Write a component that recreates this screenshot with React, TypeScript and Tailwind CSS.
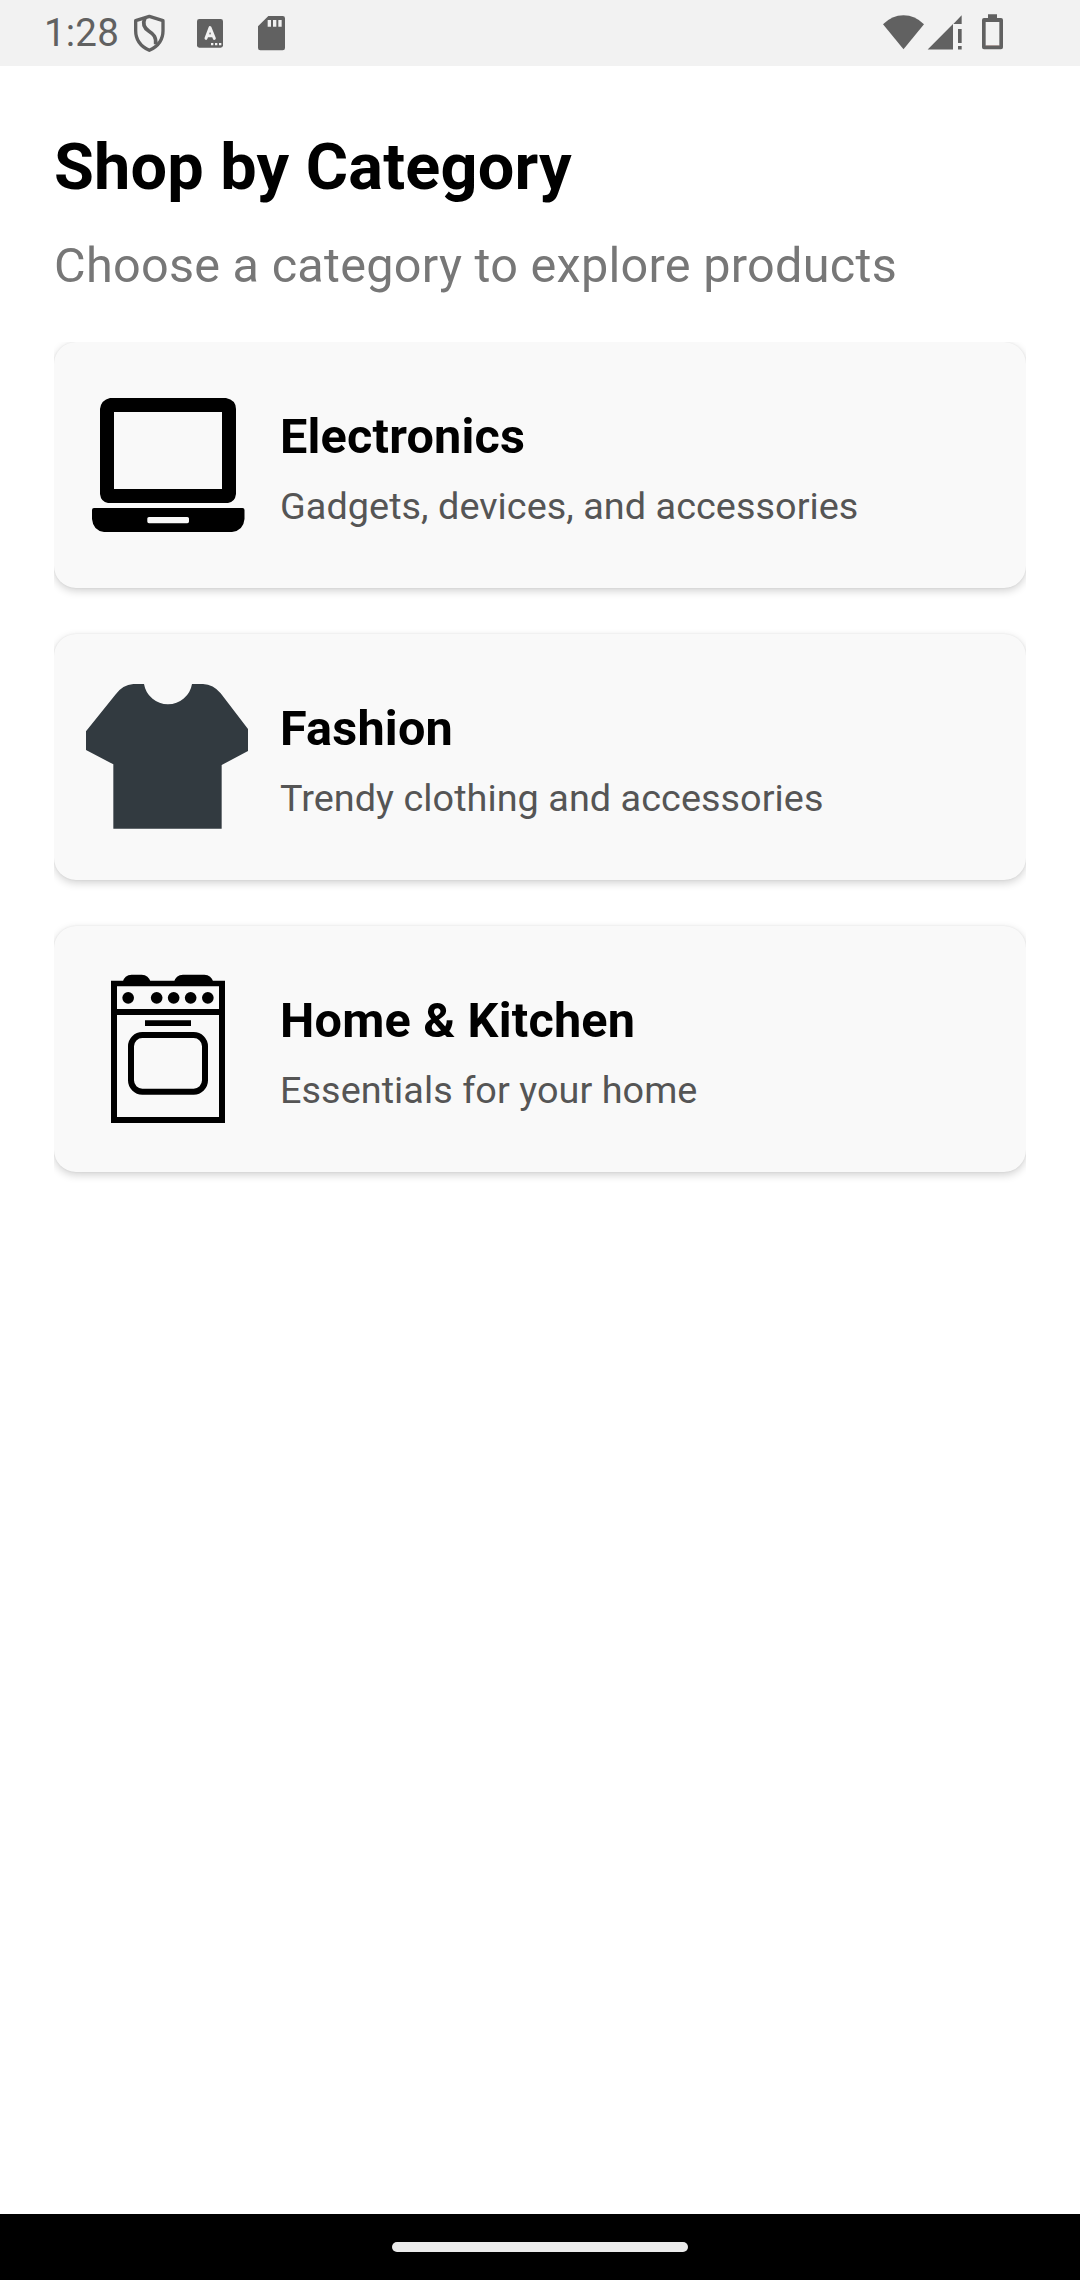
import type { ReactNode } from 'react';

function LaptopIcon() {
  return (
    <svg className="size-[162px] shrink-0" viewBox="86 384 162 162">
      <path fillRule="evenodd" d="M110 398H226Q236 400 236 409V494Q235 502 228 503H108Q101 502 100 494V409Q101 400 110 398ZM114 412V489H222V412Z" />
      <path fillRule="evenodd" d="M94 508H242.500Q244.500 508 244.500 510V519Q243.500 530.500 232 532H104Q93 530.500 92 519V510Q92 508 94 508ZM149 517Q147.300 517 147.300 518.500V521.500Q147.300 523.300 149 523.300H187.300Q189 523.300 189 521.500V518.500Q189 517 187.300 517Z" />
    </svg>
  );
}

function ShirtIcon() {
  return (
    <svg className="size-[162px] shrink-0" viewBox="48 48 486 486">
      <path fill="#323a40" d="M190 72H222A73 73 0 0 0 366 72H399Q430 73 452 100L534 207V273L455 315V506H130V313L48 270V214L136 104Q158 74 190 72Z" />
    </svg>
  );
}

function StoveIcon() {
  return (
    <svg className="size-[162px] shrink-0" viewBox="-12 24 486 486">
      <path d="M98 66Q103 45 125 44H155Q176 45 182 66ZM252 66Q257 45 279 44H343Q364 45 370 66Z" />
      <path fillRule="evenodd" d="M63 62H405V489H63ZM81 79V147H387V79ZM81 165V471H387V165Z" />
      <circle cx="114.500" cy="113.500" r="17.500" />
      <circle cx="200" cy="113.500" r="17.500" />
      <circle cx="251" cy="113.500" r="17.500" />
      <circle cx="302" cy="113.500" r="17.500" />
      <circle cx="353.500" cy="113.500" r="17.500" />
      <path d="M165 181H303V198H165Z" />
      <rect x="123" y="225" width="222" height="170" rx="34" fill="none" stroke="#000" strokeWidth="18" />
    </svg>
  );
}

function StatusBar() {
  return (
    <header className="flex h-[66px] shrink-0 items-start bg-[#f2f2f2] pl-[44px] text-[#616161]">
      <span className="w-[76px] text-[38.500px] leading-[66px] tracking-[0.2px]">1:28</span>
      <svg className="ml-[10px] h-[65px] w-[200px]" viewBox="390 0 600 195">
        <g transform="translate(90 0)">
          <path d="M358 49L399 62V92Q399 132 358 151Q317 132 317 92V62Z" fill="none" stroke="currentColor" strokeWidth="10" strokeLinejoin="round" />
          <path d="M345 54C335 75 345 86 357 94C371 103 379 110 377 133" fill="none" stroke="currentColor" strokeWidth="11" />
          <rect x="501" y="57" width="78" height="86" rx="7" fill="currentColor" />
          <path d="M528 115L540 83L553 115M532 107H549" fill="none" stroke="#f2f2f2" strokeWidth="9" strokeLinecap="round" strokeLinejoin="round" />
          <path d="M543 129h7v7h-7zM555 129h7v7h-7zM567 129h7v7h-7z" fill="#f2f2f2" />
          <path fillRule="evenodd" fill="currentColor" d="M715 48H758Q765 48 765 55V144Q765 151 758 151H691Q684 151 684 144V79ZM713 60V80H723V60ZM729 60V80H739V60ZM745 60V80H755V60Z" />
        </g>
      </svg>
      <svg className="mr-[72px] ml-auto h-[65px] w-[134px]" viewBox="42 0 402 195" fill="currentColor">
        <path d="M69 73Q96 46 130.500 46T192 73L130.500 148Z" />
        <path d="M203 148.500L279 72V148.500ZM280 72L305 46V72ZM294 87H305V129H294ZM294 138H305V148.500H294Z" />
        <path fillRule="evenodd" d="M384 43H411V54H423Q429 54 429 60V142Q429 148 423 148H372Q366 148 366 142V60Q366 54 372 54H384ZM377 66V136H418V66Z" />
        <path d="M377 135H418V137H377Z" fill="#b7a29e" />
      </svg>
    </header>
  );
}

function CategoryCard({ icon, title, description }: { icon: ReactNode; title: string; description: string }) {
  return (
    <section className="flex h-[246px] items-center gap-[32px] rounded-[22px] bg-[#f9f9f9] px-8 shadow-[0_3px_8px_rgba(0,0,0,0.18),0_0_2px_rgba(0,0,0,0.08)]">
      {icon}
      <div className="pt-[6px]">
        <h2 className="text-[48.600px] leading-[57px] font-bold tracking-[0.2px]">{title}</h2>
        <p className="mt-[19px] text-[37.800px] leading-[44px] tracking-[0.05px] text-[#555]">{description}</p>
      </div>
    </section>
  );
}

export default function App() {
  return (
    <div className="flex h-[2280px] w-[1080px] flex-col bg-white font-['Roboto',sans-serif] text-black">
      <StatusBar />
      <main className="flex flex-1 flex-col px-[54px] pt-[63px]">
        <h1 className="text-[64.800px] leading-[76px] font-bold tracking-[0.2px]">Shop by Category</h1>
        <p className="mt-[32px] text-[48.600px] leading-[57px] tracking-[0.27px] text-[#777]">Choose a category to explore products</p>
        <div className="mt-[48px] flex flex-col gap-[46px] overflow-hidden pb-6">
          <CategoryCard icon={<LaptopIcon />} title="Electronics" description="Gadgets, devices, and accessories" />
          <CategoryCard icon={<ShirtIcon />} title="Fashion" description="Trendy clothing and accessories" />
          <CategoryCard icon={<StoveIcon />} title="Home &amp; Kitchen" description="Essentials for your home" />
        </div>
      </main>
      <footer className="flex h-[66px] shrink-0 justify-center bg-black pt-7">
        <div className="h-[10px] w-[296px] rounded-full bg-[#ebebeb]" />
      </footer>
    </div>
  );
}
